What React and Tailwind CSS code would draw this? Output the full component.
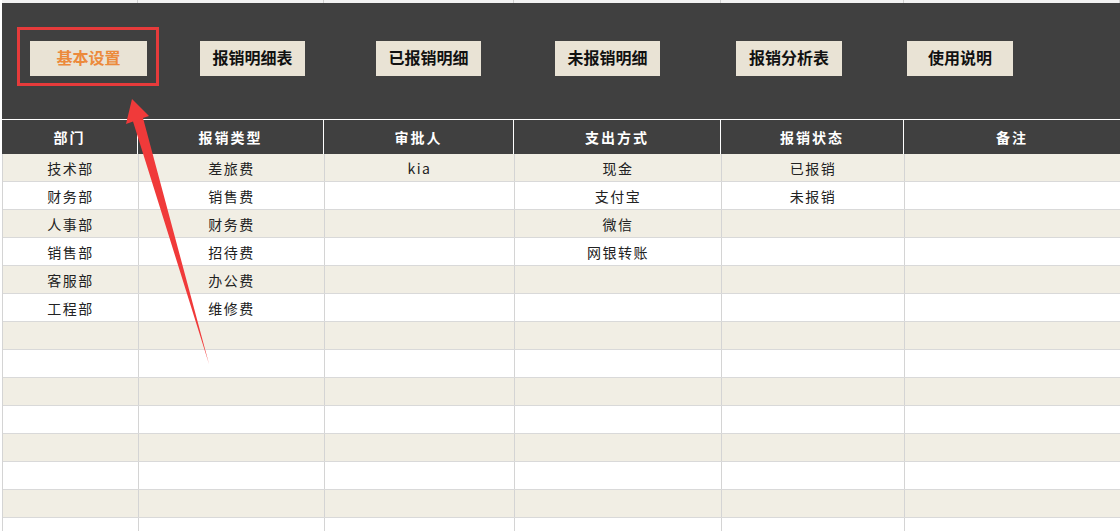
import React from 'react'

const cols = ['部门', '报销类型', '审批人', '支出方式', '报销状态', '备注']
const grid = 'grid grid-cols-[136px_186px_190px_207px_183px_1fr]'

const data = [
  ['技术部', '差旅费', 'kia', '现金', '已报销', ''],
  ['财务部', '销售费', '', '支付宝', '未报销', ''],
  ['人事部', '财务费', '', '微信', '', ''],
  ['销售部', '招待费', '', '网银转账', '', ''],
  ['客服部', '办公费', '', '', '', ''],
  ['工程部', '维修费', '', '', '', ''],
]
while (data.length < 14) data.push(['', '', '', '', '', ''])

const buttons = [
  { label: '基本设置', cls: 'ml-[28px] w-[117px] text-[#ec8a3c]' },
  { label: '报销明细表', cls: 'ml-[53px] w-[105px] text-[#111]' },
  { label: '已报销明细', cls: 'ml-[71px] w-[105px] text-[#111]' },
  { label: '未报销明细', cls: 'ml-[74px] w-[105px] text-[#111]' },
  { label: '报销分析表', cls: 'ml-[76px] w-[106px] text-[#111]' },
  { label: '使用说明', cls: 'ml-[65px] w-[106px] text-[#111]' },
]

const font = { fontFamily: '"Noto Sans CJK SC", "Noto Sans", sans-serif' }

export default function App() {
  return (
    <div className="relative w-[1120px] h-[531px] overflow-hidden bg-white" style={font}>
      {/* sliver of the rows above */}
      <div className={`${grid} ml-[2px] h-[3px] bg-[#f2f2f2]`}>
        {cols.map(c => <div key={c} className="border-r border-[#d0d0d0]" />)}
      </div>

      {/* dark button band */}
      <div className="ml-[2px] h-[116px] bg-[#404040] pt-[38px]">
        <div className="flex">
          {buttons.map(b => (
            <button key={b.label} className={`h-[35px] pb-[3px] leading-none bg-[#e9e3d5] text-[16px] font-bold flex items-center justify-center ${b.cls}`}>
              {b.label}
            </button>
          ))}
        </div>
      </div>

      {/* header */}
      <div className={`${grid} ml-[2px] h-[35px] bg-[#404040] border-t border-white`}>
        {cols.map((c, i) => (
          <div key={c} className={`flex items-center justify-center text-white text-[14px] font-bold tracking-[2px] ${i < 5 ? 'border-r border-white' : ''}`}>
            {c}
          </div>
        ))}
      </div>

      {/* rows */}
      <div className="ml-[2px] border-l border-[#d4d4d4]">
        {data.map((row, r) => (
          <div key={r} className={`${grid} h-[28px] border-b border-[#d9d9d9] ${r % 2 === 0 ? 'bg-[#f1eee4]' : 'bg-white'}`}>
            {row.map((v, i) => (
              <div key={i} className={`flex items-center justify-center pt-[1px] text-[14px] text-[#222] tracking-[1.5px] ${i < 5 ? 'border-r border-[#d4d4d4]' : ''}`}>
                {v}
              </div>
            ))}
          </div>
        ))}
      </div>

      {/* annotation: red frame */}
      <div className="absolute left-[17px] top-[27px] w-[142px] h-[59px] border-[3px] border-[#e63b3b]" />

      {/* annotation: arrow */}
      <svg className="absolute left-0 top-0 pointer-events-none" width="1120" height="531">
        <polygon
          points="132,99 149,116 143,118 209,364 133,121.5 126,124"
          fill="#f03a3a"
        />
      </svg>
    </div>
  )
}
